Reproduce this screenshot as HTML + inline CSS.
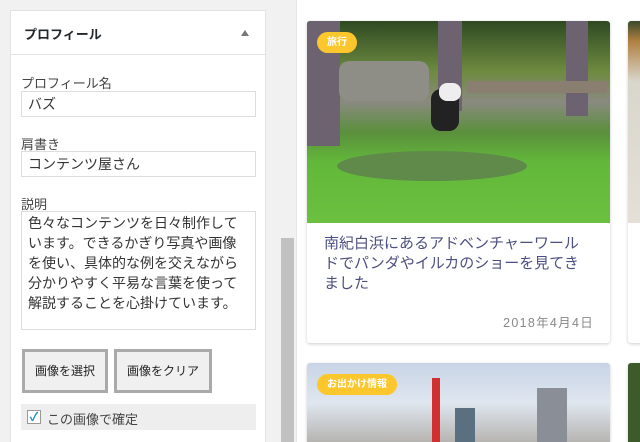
<!DOCTYPE html><html><head><meta charset="utf-8"><style>
*{margin:0;padding:0;box-sizing:border-box}
html,body{width:640px;height:442px;overflow:hidden}
body{position:relative;background:#f1f1f1;font-family:"Liberation Sans","Noto Sans CJK JP",sans-serif;color:#333}
.panel{position:absolute;left:10px;top:10px;width:256px;height:440px;background:#fff;border:1px solid #e2e2e2}
.hd{height:44px;border-bottom:1px solid #e2e2e2;font-size:13px;font-weight:bold;padding:13px 0 0 13px;color:#23282d}
.tri{position:absolute;right:16px;top:19px;width:0;height:0;border-left:4px solid transparent;border-right:4px solid transparent;border-bottom:6px solid #777}
.lab{position:absolute;left:10px;font-size:13px;color:#444}
.inp{position:absolute;left:10px;width:235px;border:1px solid #ddd;font-size:14px;color:#333;padding:2px 6px}
.btn{position:absolute;top:338px;height:44px;border:3px solid #aaa;background:#f0f0f0;font-size:12px;text-align:center;line-height:38px;color:#222}
.sb{position:absolute;left:281px;top:238px;width:13px;height:204px;background:#c1c1c1}
.right{position:absolute;left:296px;top:0;width:344px;height:442px;background:#fff;border-left:1px solid #e6e6e6}
.card{position:absolute;background:#fff;border-radius:3px;box-shadow:0 1px 3px rgba(0,0,0,.2);overflow:hidden}
.tag{position:absolute;background:#fcc72c;color:#fff;font-size:10px;font-weight:bold;border-radius:11px;height:21px;line-height:21px;padding:0 10px}
</style></head><body>
<div class="panel">
<div class="hd">プロフィール</div><div class="tri"></div>
<div class="lab" style="top:62px">プロフィール名</div>
<div class="inp" style="top:80px;height:26px">バズ</div>
<div class="lab" style="top:123px">肩書き</div>
<div class="inp" style="top:140px;height:26px">コンテンツ屋さん</div>
<div class="lab" style="top:183px">説明</div>
<div class="inp" style="top:200px;height:119px;line-height:20px;padding-top:1px">色々なコンテンツを日々制作しています。できるかぎり写真や画像を使い、具体的な例を交えながら分かりやすく平易な言葉を使って解説することを心掛けています。</div>
<div class="btn" style="left:11px;width:86px">画像を選択</div>
<div class="btn" style="left:103px;width:98px">画像をクリア</div>
<div style="position:absolute;left:10px;top:393px;width:235px;height:26px;background:#eee;font-size:13px;color:#444;padding:5px 0 0 26px">この画像で確定</div>
<div style="position:absolute;left:16px;top:399px;width:14px;height:14px;border:1px solid #999;background:#fff;color:#1e8cbe;font-size:12px;line-height:12px;text-align:center;font-weight:bold">✓</div>
</div>
<div class="sb"></div>
<div class="right">
<div class="card" style="left:10px;top:21px;width:303px;height:322px">
<div style="height:202px;background:linear-gradient(180deg,#2f4a22 0%,#6e8a40 25%,#8a8a80 40%,#5b8f3c 55%,#62b83a 70%,#6cc040 100%);position:relative">
<div style="position:absolute;left:0;top:0;width:33px;height:125px;background:#6d6270"></div>
<div style="position:absolute;left:131px;top:0;width:24px;height:90px;background:#6d6270"></div>
<div style="position:absolute;left:259px;top:0;width:22px;height:95px;background:#6d6270"></div>
<div style="position:absolute;left:32px;top:40px;width:90px;height:40px;background:#8e8e86;border-radius:10px"></div>
<div style="position:absolute;left:160px;top:60px;width:140px;height:12px;background:#8a7e70"></div>
<div style="position:absolute;left:124px;top:68px;width:28px;height:42px;background:#222;border-radius:10px"></div>
<div style="position:absolute;left:132px;top:62px;width:22px;height:18px;background:#eee;border-radius:8px"></div>
<div style="position:absolute;left:30px;top:130px;width:190px;height:30px;background:#5f8a4a;border-radius:50%"></div>
<div class="tag" style="left:10px;top:11px">旅行</div></div>
<div style="margin:11px 0 0 17px;width:262px;font-size:15px;line-height:20px;color:#4d4f80">南紀白浜にあるアドベンチャーワールドでパンダやイルカのショーを見てきました</div>
<div style="position:absolute;right:16px;bottom:12px;font-size:12.5px;color:#888;letter-spacing:1.3px">2018年4月4日</div>
</div>
<div class="card" style="left:331px;top:21px;width:40px;height:322px"><div style="height:202px;background:linear-gradient(180deg,#3b4a2c 0%,#b08040 10%,#d9d6cc 30%,#e4e0d8)"></div></div>
<div class="card" style="left:10px;top:363px;width:303px;height:100px;background:linear-gradient(180deg,#c8d4e6,#dfe6ef 40%,#a09a90 100%)">
<div style="position:absolute;left:125px;top:15px;width:8px;height:70px;background:#d03030"></div>
<div style="position:absolute;left:148px;top:45px;width:20px;height:40px;background:#5a7080"></div>
<div style="position:absolute;left:230px;top:25px;width:30px;height:60px;background:#8a8e96"></div>
<div class="tag" style="left:10px;top:11px">お出かけ情報</div></div>
<div class="card" style="left:331px;top:363px;width:40px;height:100px;background:#3d5a2a"></div>
</div>
</body></html>
